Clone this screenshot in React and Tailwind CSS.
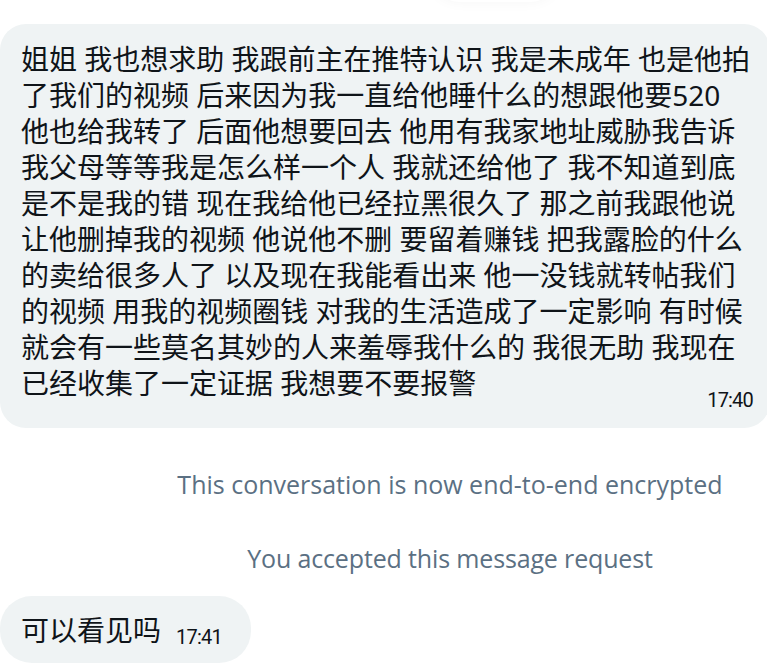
import React from 'react';

const lines = [
  '姐姐 我也想求助 我跟前主在推特认识 我是未成年 也是他拍',
  '了我们的视频 后来因为我一直给他睡什么的想跟他要520',
  '他也给我转了 后面他想要回去 他用有我家地址威胁我告诉',
  '我父母等等我是怎么样一个人 我就还给他了 我不知道到底',
  '是不是我的错 现在我给他已经拉黑很久了 那之前我跟他说',
  '让他删掉我的视频 他说他不删 要留着赚钱 把我露脸的什么',
  '的卖给很多人了 以及现在我能看出来 他一没钱就转帖我们',
  '的视频 用我的视频圈钱 对我的生活造成了一定影响 有时候',
  '就会有一些莫名其妙的人来羞辱我什么的 我很无助 我现在',
  '已经收集了一定证据 我想要不要报警',
];

const bodyFont = "font-['Noto_Sans','Noto_Sans_CJK_SC',sans-serif]";

const App = () => {
  return (
    <div className="relative w-[767px] h-[666px] overflow-hidden bg-white">
      {/* faint shadow of floating element above the viewport */}
      <div className="absolute left-[430px] -top-[58px] w-[130px] h-[60px] rounded-full bg-white shadow-[0_0_14px_rgba(0,0,0,0.04)]" />

      <div className="flex flex-col pt-[24px]">
        <div className={`w-[770px] rounded-[26px] bg-[#eff3f4] pl-[21px] pr-[17px] pt-[17px] pb-[18px] text-[#0f1419] ${bodyFont}`}>
          <div className="text-[28px] leading-[36px]">
            {lines.map((l, i) => (
              <div key={i} className="whitespace-nowrap">{l}</div>
            ))}
          </div>
          <div className="-mt-[11px] text-right text-[20px] leading-[20px] tracking-[-0.8px] font-['Roboto',sans-serif]">17:40</div>
        </div>

        <div className="w-[900px] mt-[40px] text-center text-[25px] leading-[32px] text-[#5b7083] font-['Open_Sans',sans-serif]">
          This conversation is now end-to-end encrypted
        </div>
        <div className="w-[900px] mt-[42px] text-center text-[25px] leading-[32px] text-[#5b7083] font-['Open_Sans',sans-serif] tracking-[-0.15px]">
          You accepted this message request
        </div>

        <div className="mt-[22px] flex">
          <div className={`flex items-end h-[67px] rounded-[32px] bg-[#eff3f4] pl-[21px] pr-[29px] pb-[15px] text-[#0f1419] ${bodyFont}`}>
            <span className="text-[28px] leading-[36px]">可以看见吗</span>
            <span className="ml-[15px] mb-[1px] text-[20px] leading-[20px] tracking-[-0.8px] font-['Roboto',sans-serif]">17:41</span>
          </div>
        </div>
      </div>
    </div>
  );
};

export default App;
